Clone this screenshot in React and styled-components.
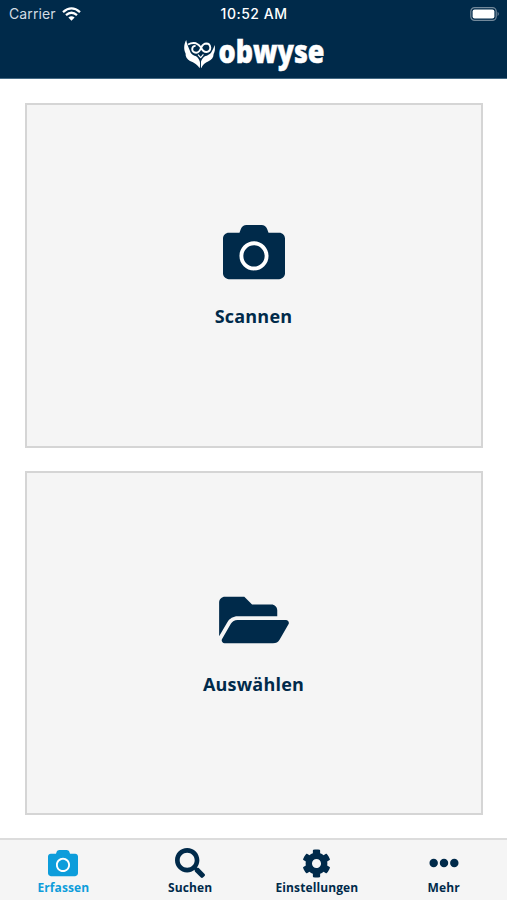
import styled, { createGlobalStyle } from 'styled-components';
import { FaFolderOpen, FaSearch, FaCog, FaEllipsisH } from 'react-icons/fa';

const navy = '#002a4a';
const blue = '#0d9ddb';

const GlobalStyle = createGlobalStyle`
  * {
    box-sizing: border-box;
  }
  body {
    margin: 0;
    background: #fff;
  }
`
const Screen = styled.div`
  display: flex;
  flex-direction: column;
  height: 900px;
  font-family: 'Open Sans', sans-serif;
  color: ${navy};
`
const Header = styled.header`
  height: 79px;
  background: ${navy};
  border-bottom: 1px solid #446983;
  color: #fff;
`
const StatusBar = styled.div`
  display: grid;
  grid-template-columns: 1fr auto 1fr;
  align-items: center;
  height: 27px;
  padding: 0 7px 0 9px;
  font-family: 'Inter', sans-serif;
  font-size: 14px;
  line-height: 27px;
`
const Carrier = styled.div`
  display: flex;
  align-items: center;
  gap: 6px;
  color: #d3dce3;
  letter-spacing: 0.1px;
`
const Time = styled.div`
  margin-right: 1px;
  font-weight: 500;
  letter-spacing: 0.5px;
`
const Battery = styled.div`
  display: flex;
  justify-content: flex-end;
`
const Brand = styled.div`
  display: flex;
  justify-content: center;
  height: 46px;
  padding-left: 28px;
`
const Main = styled.main`
  display: flex;
  flex-direction: column;
  flex: 1;
  gap: 23px;
  padding: 24px 24px 23px 25px;
`
const Card = styled.button`
  display: flex;
  flex: 1;
  flex-direction: column;
  align-items: center;
  justify-content: center;
  gap: 20px;
  padding: 0 1px 0 0;
  border: 2px solid #d5d5d5;
  background: #f5f5f5;
  color: ${navy};
  font-family: inherit;
`
const CardLabel = styled.span`
  font-size: 18px;
  font-weight: 700;
  line-height: 26px;
  letter-spacing: 0.2px;
`
const FolderIcon = styled(FaFolderOpen)`
  width: 70px;
  height: 62px;
`
const TabBar = styled.nav`
  display: grid;
  grid-template-columns: repeat(4, 1fr);
  height: 62px;
  border-top: 2px solid #dcdcdc;
  background: #f5f5f5;
`
const Tab = styled.a`
  display: flex;
  flex-direction: column;
  align-items: center;
  padding-top: 8px;
  color: ${props => props.$active ? blue : navy};
  font-size: 12px;
  font-weight: 700;
  line-height: 18px;
  letter-spacing: 0.1px;
`
const TabIcon = styled.span`
  display: flex;
  align-items: center;
  justify-content: center;
  height: 30px;
  margin-bottom: 1px;
`

const CameraIcon = ({size}) => (
  <svg width={size} height={size} viewBox="0 0 512 512" fill="currentColor">
    <circle cx="256" cy="288" r="124" fill="#fff" />
    <path d="M512 144v288c0 26.5-21.5 48-48 48H48c-26.5 0-48-21.5-48-48V144c0-26.5 21.5-48 48-48h88l12.3-32.9c7-18.7 24.9-31.1 44.9-31.1h125.5c20 0 37.9 12.4 44.9 31.1L376 96h88c26.5 0 48 21.5 48 48zM376 288c0-66.2-53.8-120-120-120s-120 53.8-120 120 53.8 120 120 120 120-53.8 120-120zm-32 0c0 48.5-39.5 88-88 88s-88-39.5-88-88 39.5-88 88-88 88 39.5 88 88z" />
  </svg>
)

const WifiIcon = () => (
  <svg width="19" height="14" viewBox="0 0 19 14" fill="none" stroke="#fff" strokeWidth="2.3">
    <path d="M1 5.1Q9.5 -2.4 18 5.1" />
    <path d="M4 8.2Q9.5 3.4 15 8.2" />
    <path d="M6.4 10.6Q9.5 7.8 12.6 10.6L9.5 13.8Z" fill="#fff" stroke="none" />
  </svg>
)

const BatteryIcon = () => (
  <svg width="30" height="14" viewBox="0 0 30 14">
    <rect x="0.8" y="0.6" width="25.4" height="12.8" rx="3.8" fill="none" stroke="#73899b" strokeWidth="1.2" />
    <rect x="2.6" y="2.4" width="21.8" height="9.2" rx="2" fill="#fff" />
    <path d="M27.6 4.8Q30 7 27.6 9.2Z" fill="#73899b" />
  </svg>
)

// owl with wing shaped sides followed by the word mark
const Logo = () => (
  <svg width="172" height="52" viewBox="0 0 172 52" fill="none">
    <g fill="#fff">
      <path d="M4.2 13C1.5 18 1.8 23 3.6 26.5C3.3 29.5 5 32.5 8 34C12 35.5 16 38 17.6 41.3C19 36 17.6 32 14.5 29.5C12 28.5 9 27.5 8 24C6.5 20 4.8 17 4.2 13Z" />
      <path d="M32.6 18C33.4 22 32.8 25 31.6 27C31.6 30.5 29.5 33 26.5 34.3C23 35.7 20.5 38 19.2 41.3C17.7 36.5 19.3 32 22.5 29.5C25.5 28.3 28.5 27.5 30 24Q31.6 21.5 32.6 18Z" />
    </g>
    <g stroke="#fff" strokeWidth="1.9">
      <path d="M6 17.5Q10 15.4 14 16.3Q17 17.3 19 20.5Q21 25 24.3 25Q28.3 24.6 28.3 20.7Q28 16.6 24.3 16.5Q21.2 16.5 19.2 20.5Q17.4 25.6 14.2 25.7Q10.3 25.4 10.2 22Q10.5 18.8 13.6 18.9" />
      <path d="M16 27.6L18.7 30.6L21.4 27.4" strokeWidth="1.2" />
    </g>
    <path d="M18.5 31.5V41.5" stroke={navy} strokeWidth="0.9" />
    <text x="36.5" y="35.5" fill="#fff" stroke="#fff" strokeWidth="0.5" fontFamily="Open Sans, sans-serif" fontSize="31" fontWeight="800" textLength="106" lengthAdjust="spacingAndGlyphs">obwyse</text>
  </svg>
)

const tabs = [
  { label: 'Erfassen', icon: <CameraIcon size={30} />, active: true },
  { label: 'Suchen', icon: <FaSearch size={30} /> },
  { label: 'Einstellungen', icon: <FaCog size={29} /> },
  { label: 'Mehr', icon: <FaEllipsisH size={30} /> },
]

const App = () => {
  return (
    <>
      <GlobalStyle />
      <Screen>
        <Header>
          <StatusBar>
            <Carrier>Carrier <WifiIcon /></Carrier>
            <Time>10:52 AM</Time>
            <Battery><BatteryIcon /></Battery>
          </StatusBar>
          <Brand><Logo /></Brand>
        </Header>
        <Main>
          <Card>
            <CameraIcon size={62} />
            <CardLabel>Scannen</CardLabel>
          </Card>
          <Card>
            <FolderIcon />
            <CardLabel>Auswählen</CardLabel>
          </Card>
        </Main>
        <TabBar>
          {tabs.map((tab) => (
            <Tab key={tab.label} $active={tab.active}>
              <TabIcon>{tab.icon}</TabIcon>
              {tab.label}
            </Tab>
          ))}
        </TabBar>
      </Screen>
    </>
  )
}
export default App;
